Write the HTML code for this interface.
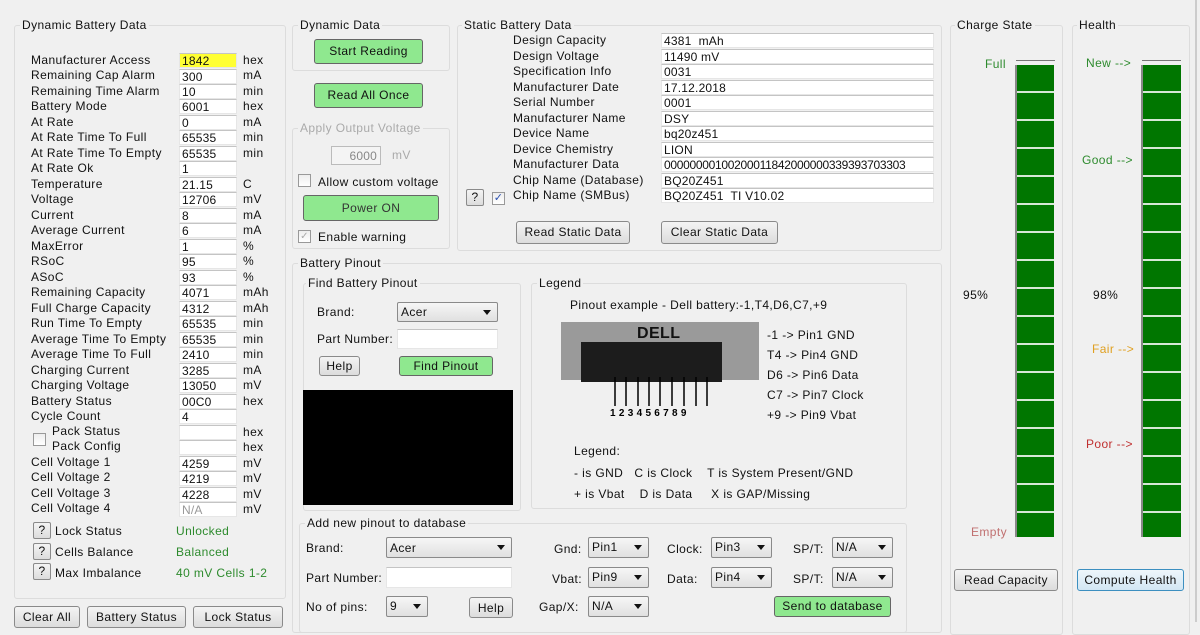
<!DOCTYPE html>
<html><head><meta charset="utf-8"><style>
*{box-sizing:border-box;margin:0;padding:0}
body{width:1200px;height:622px;overflow:hidden;background:#f0f0f0;font:12px "Liberation Sans",sans-serif;color:#111;position:relative;letter-spacing:.4px}
.a{position:absolute;white-space:nowrap}
.g{position:absolute;border:1px solid #dcdcdc;border-radius:3px}
.gt{position:absolute;background:#f0f0f0;padding:0 2px;line-height:14px;white-space:nowrap}
.in{position:absolute;background:#fff;border:1px solid #e6e6e6;border-top-color:#c4c4c4;height:15px;line-height:14px;padding-left:2px;white-space:nowrap;overflow:hidden;letter-spacing:.2px}
.btn{position:absolute;border:1px solid #8a8a8a;border-radius:3px;background:linear-gradient(#f4f4f4,#dcdcdc);text-align:center;white-space:nowrap}
.gr{background:#8fe88f;border-color:#666}
.sel{position:absolute;border:1px solid #8a8a8a;border-radius:2px;background:linear-gradient(#f6f6f6,#e0e0e0);padding-left:3px;white-space:nowrap}
.sel:after{content:"";position:absolute;right:6px;top:7px;border-left:4px solid transparent;border-right:4px solid transparent;border-top:5px solid #111}
.cb{position:absolute;width:13px;height:13px;border:1px solid #999;background:linear-gradient(#ededed,#fff)}
.q{position:absolute;width:18px;height:17px;border:1px solid #8a8a8a;border-radius:2px;background:linear-gradient(#f4f4f4,#dcdcdc);text-align:center;line-height:15px}
.bar{position:absolute;background:repeating-linear-gradient(#007600 0 26px,#d6e8d6 26px 28px);border-left:2px solid #888;}
.gn{color:#2e8b2e}
</style></head><body>

<div class="g" style="left:14px;top:25px;width:272px;height:574px"></div>
<div class="gt" style="left:20px;top:18px">Dynamic Battery Data</div>

<div class="a" style="left:31px;top:53px;line-height:15.48px">
Manufacturer Access<br>Remaining Cap Alarm<br>Remaining Time Alarm<br>Battery Mode<br>At Rate<br>At Rate Time To Full<br>At Rate Time To Empty<br>At Rate Ok<br>Temperature<br>Voltage<br>Current<br>Average Current<br>MaxError<br>RSoC<br>ASoC<br>Remaining Capacity<br>Full Charge Capacity<br>Run Time To Empty<br>Average Time To Empty<br>Average Time To Full<br>Charging Current<br>Charging Voltage<br>Battery Status<br>Cycle Count</div>
<div class="a" style="left:52px;top:424px;line-height:15.48px">Pack Status<br>Pack Config</div>
<div class="a" style="left:31px;top:455px;line-height:15.48px">Cell Voltage 1<br>Cell Voltage 2<br>Cell Voltage 3<br>Cell Voltage 4</div>
<div class="cb" style="left:33px;top:433px"></div>

<div class="in" style="left:179px;top:53px;width:58px;background:#ffff33">1842</div>
<div class="in" style="left:179px;top:68.5px;width:58px">300</div>
<div class="in" style="left:179px;top:84px;width:58px">10</div>
<div class="in" style="left:179px;top:99.4px;width:58px">6001</div>
<div class="in" style="left:179px;top:115px;width:58px">0</div>
<div class="in" style="left:179px;top:130.4px;width:58px">65535</div>
<div class="in" style="left:179px;top:146px;width:58px">65535</div>
<div class="in" style="left:179px;top:161.4px;width:58px">1</div>
<div class="in" style="left:179px;top:177px;width:58px">21.15</div>
<div class="in" style="left:179px;top:192.4px;width:58px">12706</div>
<div class="in" style="left:179px;top:208px;width:58px">8</div>
<div class="in" style="left:179px;top:223.4px;width:58px">6</div>
<div class="in" style="left:179px;top:239px;width:58px">1</div>
<div class="in" style="left:179px;top:254.4px;width:58px">95</div>
<div class="in" style="left:179px;top:270px;width:58px">93</div>
<div class="in" style="left:179px;top:285.4px;width:58px">4071</div>
<div class="in" style="left:179px;top:301px;width:58px">4312</div>
<div class="in" style="left:179px;top:316.4px;width:58px">65535</div>
<div class="in" style="left:179px;top:332px;width:58px">65535</div>
<div class="in" style="left:179px;top:347.4px;width:58px">2410</div>
<div class="in" style="left:179px;top:363px;width:58px">3285</div>
<div class="in" style="left:179px;top:378.4px;width:58px">13050</div>
<div class="in" style="left:179px;top:394px;width:58px">00C0</div>
<div class="in" style="left:179px;top:409.4px;width:58px">4</div>
<div class="in" style="left:179px;top:425px;width:58px"></div>
<div class="in" style="left:179px;top:440.4px;width:58px"></div>
<div class="in" style="left:179px;top:456px;width:58px">4259</div>
<div class="in" style="left:179px;top:471.4px;width:58px">4219</div>
<div class="in" style="left:179px;top:487px;width:58px">4228</div>
<div class="in" style="left:179px;top:502.4px;width:58px;color:#999">N/A</div>

<div class="a" style="left:243px;top:53px;line-height:15.48px">hex<br>mA<br>min<br>hex<br>mA<br>min<br>min<br>&nbsp;<br>C<br>mV<br>mA<br>mA<br>%<br>%<br>%<br>mAh<br>mAh<br>min<br>min<br>min<br>mA<br>mV<br>hex<br>&nbsp;<br>hex<br>hex<br>mV<br>mV<br>mV<br>mV</div>

<div class="q" style="left:33px;top:522px">?</div><div class="a" style="left:55px;top:524px">Lock Status</div><div class="a gn" style="left:176px;top:524px">Unlocked</div>
<div class="q" style="left:33px;top:543px">?</div><div class="a" style="left:55px;top:545px">Cells Balance</div><div class="a gn" style="left:176px;top:545px">Balanced</div>
<div class="q" style="left:33px;top:563px">?</div><div class="a" style="left:55px;top:566px">Max Imbalance</div><div class="a gn" style="left:176px;top:566px">40 mV Cells 1-2</div>

<div class="btn" style="left:14px;top:606px;width:66px;height:22px;line-height:20px">Clear All</div>
<div class="btn" style="left:87px;top:606px;width:99px;height:22px;line-height:20px">Battery Status</div>
<div class="btn" style="left:193px;top:606px;width:90px;height:22px;line-height:20px">Lock Status</div>

<div class="g" style="left:292px;top:25px;width:158px;height:46px"></div>
<div class="gt" style="left:298px;top:18px">Dynamic Data</div>
<div class="btn gr" style="left:314px;top:39px;width:109px;height:25px;line-height:23px">Start Reading</div>
<div class="btn gr" style="left:314px;top:83px;width:109px;height:25px;line-height:23px">Read All Once</div>
<div class="g" style="left:292px;top:128px;width:158px;height:121px"></div>
<div class="gt" style="left:298px;top:121px;color:#aaa">Apply Output Voltage</div>
<div class="in" style="left:331px;top:146px;width:50px;height:19px;line-height:18px;text-align:right;padding-right:3px;background:#f4f4f4;color:#888;border-color:#bbb">6000</div>
<div class="a" style="left:392px;top:148px;color:#aaa">mV</div>
<div class="cb" style="left:298px;top:174px"></div><div class="a" style="left:318px;top:175px">Allow custom voltage</div>
<div class="btn gr" style="left:303px;top:195px;width:136px;height:26px;line-height:24px;color:#333">Power ON</div>
<div class="cb" style="left:298px;top:230px;color:#aaa;font-size:10px;line-height:11px;text-align:center">✓</div><div class="a" style="left:318px;top:230px">Enable warning</div>

<div class="g" style="left:457px;top:25px;width:485px;height:226px"></div>
<div class="gt" style="left:462px;top:18px">Static Battery Data</div>
<div class="a" style="left:513px;top:33px;line-height:15.5px">Design Capacity<br>Design Voltage<br>Specification Info<br>Manufacturer Date<br>Serial Number<br>Manufacturer Name<br>Device Name<br>Device Chemistry<br>Manufacturer Data<br>Chip Name (Database)<br>Chip Name (SMBus)</div>
<div class="in" style="left:661px;top:33px;width:273px">4381&nbsp; mAh</div>
<div class="in" style="left:661px;top:48.5px;width:273px">11490 mV</div>
<div class="in" style="left:661px;top:64px;width:273px">0031</div>
<div class="in" style="left:661px;top:79.5px;width:273px">17.12.2018</div>
<div class="in" style="left:661px;top:95px;width:273px">0001</div>
<div class="in" style="left:661px;top:110.5px;width:273px">DSY</div>
<div class="in" style="left:661px;top:126px;width:273px">bq20z451</div>
<div class="in" style="left:661px;top:141.5px;width:273px">LION</div>
<div class="in" style="left:661px;top:157px;width:273px;letter-spacing:-.3px">00000000100200011842000000339393703303</div>
<div class="in" style="left:661px;top:172.5px;width:273px">BQ20Z451</div>
<div class="in" style="left:661px;top:188px;width:273px">BQ20Z451&nbsp; TI V10.02</div>
<div class="q" style="left:466px;top:189px">?</div>
<div class="cb" style="left:492px;top:192px;color:#2a4fb0;font-size:11px;line-height:11px;text-align:center">✓</div>
<div class="btn" style="left:516px;top:221px;width:114px;height:23px;line-height:21px">Read Static Data</div>
<div class="btn" style="left:661px;top:221px;width:117px;height:23px;line-height:21px">Clear Static Data</div>

<div class="g" style="left:292px;top:263px;width:650px;height:370px"></div>
<div class="gt" style="left:298px;top:256px">Battery Pinout</div>
<div class="g" style="left:303px;top:283px;width:218px;height:228px"></div>
<div class="gt" style="left:306px;top:276px">Find Battery Pinout</div>
<div class="a" style="left:317px;top:305px">Brand:</div>
<div class="sel" style="left:397px;top:302px;width:101px;height:20px;line-height:19px">Acer</div>
<div class="a" style="left:317px;top:332px">Part Number:</div>
<div class="in" style="left:397px;top:329px;width:101px;height:20px"></div>
<div class="btn" style="left:319px;top:356px;width:41px;height:20px;line-height:18px">Help</div>
<div class="btn gr" style="left:399px;top:356px;width:94px;height:20px;line-height:18px">Find Pinout</div>
<div class="a" style="left:303px;top:390px;width:210px;height:115px;background:#000"></div>

<div class="g" style="left:531px;top:283px;width:376px;height:226px"></div>
<div class="gt" style="left:537px;top:276px">Legend</div>
<div class="a" style="left:570px;top:298px">Pinout example - Dell battery:-1,T4,D6,C7,+9</div>
<div class="a" style="left:561px;top:322px;width:198px;height:58px;background:#9a9a9a"></div>
<div class="a" style="left:581px;top:342px;width:141px;height:40px;background:#1c1c1c"></div>
<div class="a" style="left:637px;top:325px;font-weight:bold;font-size:16px;color:#111">DELL</div>
<svg class="a" style="left:561px;top:322px" width="200" height="100"><g stroke="#000" stroke-width="1.5"><line x1="54" y1="55" x2="54" y2="84"/><line x1="65" y1="55" x2="65" y2="84"/><line x1="77" y1="55" x2="77" y2="84"/><line x1="88" y1="55" x2="88" y2="84"/><line x1="99" y1="55" x2="99" y2="84"/><line x1="111" y1="55" x2="111" y2="84"/><line x1="123" y1="55" x2="123" y2="84"/><line x1="135" y1="55" x2="135" y2="84"/><line x1="146" y1="55" x2="146" y2="84"/></g><text x="49" y="94" font-size="10" font-weight="bold" font-family="Liberation Sans" letter-spacing="3.3">123456789</text></svg>
<div class="a" style="left:767px;top:325px;line-height:20px">-1 -&gt; Pin1 GND<br>T4 -&gt; Pin4 GND<br>D6 -&gt; Pin6 Data<br>C7 -&gt; Pin7 Clock<br>+9 -&gt; Pin9 Vbat</div>
<div class="a" style="left:574px;top:444px">Legend:</div>
<div class="a" style="left:574px;top:466px">- is GND&nbsp;&nbsp; C is Clock&nbsp;&nbsp;&nbsp; T is System Present/GND</div>
<div class="a" style="left:574px;top:487px">+ is Vbat&nbsp;&nbsp;&nbsp; D is Data&nbsp;&nbsp;&nbsp;&nbsp; X is GAP/Missing</div>

<div class="g" style="left:299px;top:523px;width:608px;height:110px"></div>
<div class="gt" style="left:305px;top:516px">Add new pinout to database</div>
<div class="a" style="left:306px;top:541px">Brand:</div>
<div class="sel" style="left:386px;top:537px;width:126px;height:21px;line-height:20px">Acer</div>
<div class="a" style="left:306px;top:571px">Part Number:</div>
<div class="in" style="left:386px;top:567px;width:126px;height:21px"></div>
<div class="a" style="left:306px;top:600px">No of pins:</div>
<div class="sel" style="left:386px;top:596px;width:42px;height:21px;line-height:19px">9</div>
<div class="btn" style="left:469px;top:597px;width:44px;height:21px;line-height:20px">Help</div>
<div class="a" style="left:554px;top:542px">Gnd:</div><div class="sel" style="left:588px;top:537px;width:61px;height:21px;line-height:18px">Pin1</div>
<div class="a" style="left:552px;top:572px">Vbat:</div><div class="sel" style="left:588px;top:567px;width:61px;height:21px;line-height:19px">Pin9</div>
<div class="a" style="left:539px;top:600px">Gap/X:</div><div class="sel" style="left:588px;top:596px;width:61px;height:21px;line-height:18px">N/A</div>
<div class="a" style="left:667px;top:542px">Clock:</div><div class="sel" style="left:711px;top:537px;width:61px;height:21px;line-height:18px">Pin3</div>
<div class="a" style="left:667px;top:572px">Data:</div><div class="sel" style="left:711px;top:567px;width:61px;height:21px;line-height:19px">Pin4</div>
<div class="a" style="left:793px;top:542px">SP/T:</div><div class="sel" style="left:832px;top:537px;width:61px;height:21px;line-height:18px">N/A</div>
<div class="a" style="left:793px;top:572px">SP/T:</div><div class="sel" style="left:832px;top:567px;width:61px;height:21px;line-height:19px">N/A</div>
<div class="btn gr" style="left:774px;top:596px;width:117px;height:21px;line-height:19px">Send to database</div>

<div class="g" style="left:950px;top:25px;width:113px;height:610px"></div>
<div class="gt" style="left:955px;top:18px">Charge State</div>
<div class="a" style="left:1016px;top:60px;width:39px;border-top:1px solid #777"></div>
<div class="bar" style="left:1015px;top:65px;width:39px;height:472px"></div>
<div class="a gn" style="left:985px;top:57px">Full</div>
<div class="a" style="left:963px;top:288px">95%</div>
<div class="a" style="left:971px;top:525px;color:#c07070">Empty</div>
<div class="btn" style="left:954px;top:569px;width:104px;height:22px;line-height:20px">Read Capacity</div>

<div class="g" style="left:1072px;top:25px;width:118px;height:610px"></div>
<div class="gt" style="left:1077px;top:18px">Health</div>
<div class="a" style="left:1142px;top:60px;width:39px;border-top:1px solid #777"></div>
<div class="bar" style="left:1141px;top:65px;width:40px;height:472px"></div>
<div class="a gn" style="left:1086px;top:56px">New --&gt;</div>
<div class="a gn" style="left:1082px;top:153px">Good --&gt;</div>
<div class="a" style="left:1092px;top:342px;color:#e0a020">Fair --&gt;</div>
<div class="a" style="left:1086px;top:437px;color:#c03030">Poor --&gt;</div>
<div class="a" style="left:1093px;top:288px">98%</div>
<div class="btn" style="left:1077px;top:569px;width:107px;height:22px;line-height:20px;border-color:#3c8fc0;background:linear-gradient(#eef6fb,#d2e6f3)">Compute Health</div>
<div class="a" style="left:1195px;top:0;width:2px;height:622px;background:#ccc"></div>
</body></html>
